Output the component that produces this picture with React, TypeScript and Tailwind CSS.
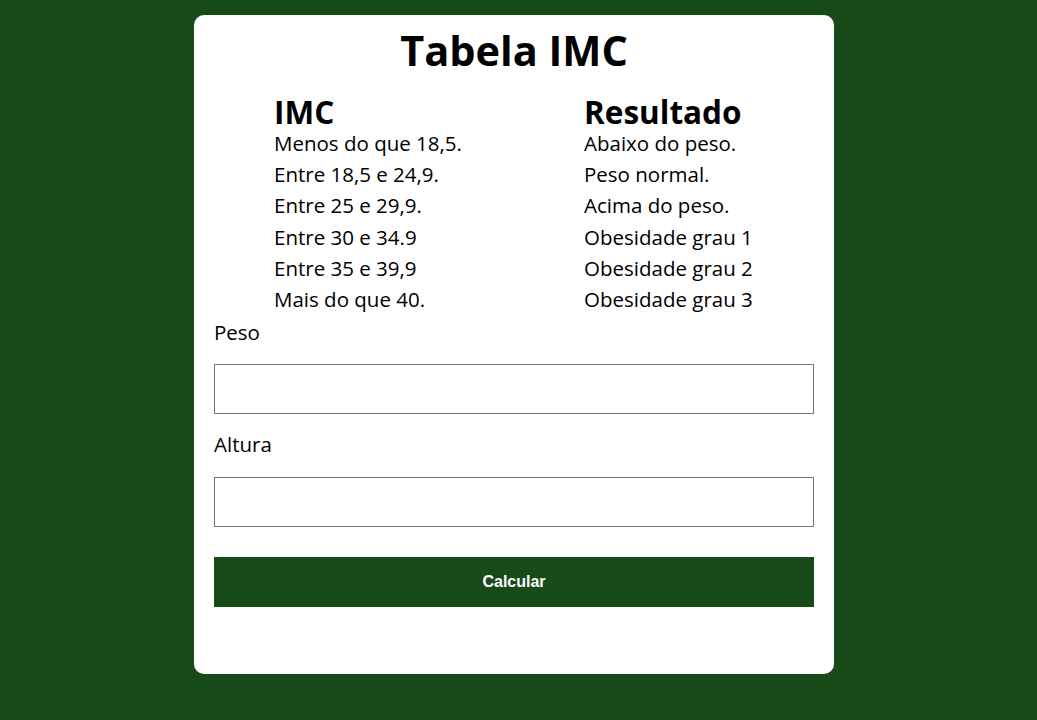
import { useState } from "react";

const faixas = [
  ["Menos do que 18,5.", "Abaixo do peso."],
  ["Entre 18,5 e 24,9.", "Peso normal."],
  ["Entre 25 e 29,9.", "Acima do peso."],
  ["Entre 30 e 34.9", "Obesidade grau 1"],
  ["Entre 35 e 39,9", "Obesidade grau 2"],
  ["Mais do que 40.", "Obesidade grau 3"],
];

export default function App() {
  const [peso, setPeso] = useState("");
  const [altura, setAltura] = useState("");

  return (
    <div className="min-h-[720px] bg-[#194a19] pt-[15px] font-['Open_Sans',sans-serif] text-black">
      <div className="ml-[194px] w-[640px] rounded-[10px] bg-white px-5 pt-[8px] pb-[67px]">
        <h1 className="text-center text-[41.5px] font-bold leading-[54px]">Tabela IMC</h1>

        <div className="mt-[19px] ml-[60px] grid grid-cols-[310px_1fr]">
          <div className="text-[31.5px] font-bold leading-[32px]">IMC</div>
          <div className="text-[31.5px] font-bold leading-[32px]">Resultado</div>
          {faixas.map(([imc, res]) => (
            <>
              <div key={imc} className="text-[20.5px] leading-[31.2px]">{imc}</div>
              <div key={res} className="text-[20.5px] leading-[31.2px]">{res}</div>
            </>
          ))}
        </div>

        <label className="mt-[2px] block text-[20.5px] leading-[31px]">Peso</label>
        <input
          value={peso}
          onChange={(e) => setPeso(e.target.value)}
          className="mt-4 block h-[50px] w-full border border-[#767676] px-2"
        />

        <label className="mt-[15px] block text-[20.5px] leading-[31px]">Altura</label>
        <input
          value={altura}
          onChange={(e) => setAltura(e.target.value)}
          className="mt-[17px] block h-[50px] w-full border border-[#767676] px-2"
        />

        <button className="mt-[30px] block h-[50px] w-full bg-[#194a19] font-['Liberation_Sans',Arial,sans-serif] text-base font-bold text-white">
          Calcular
        </button>
      </div>
    </div>
  );
}
